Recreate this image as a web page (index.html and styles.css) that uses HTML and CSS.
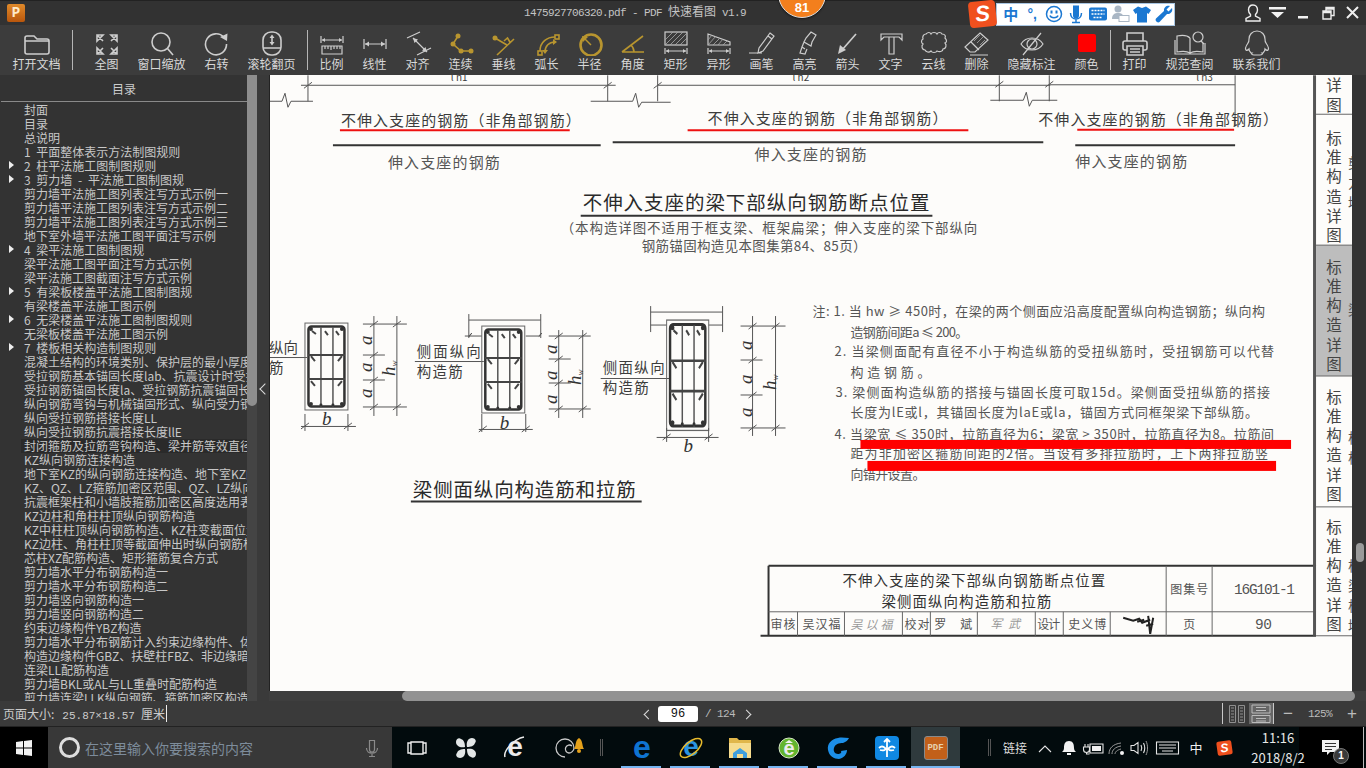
FILE: index.html
```html
<!DOCTYPE html>
<html lang="zh-CN">
<head>
    <meta charset="UTF-8">
    <title>1475927706320.pdf - PDF 快速看图 v1.9</title>
    <link rel="stylesheet" href="styles.css">
</head>
<body>
<div class="screen">

    <!-- barra de titulo -->
    <div class="titlebar">
        <div class="app-icon">P</div>
        <div class="doc-title">1475927706320.pdf - PDF <span class="cjk">快速看图</span> v1.9</div>
        <div class="win-controls">
            <svg class="win-user" width="20" height="20" viewBox="0 0 20 20"><path class="line-white" d="M10 2c3 0 4.500 2.200 4.500 5 0 2-1 3.500-2 4.500v1.500l4.500 2.500v2.500H3v-2.500L7.500 13v-1.500c-1-1-2-2.500-2-4.500 0-2.800 1.500-5 4.500-5z"/></svg>
            <svg width="20" height="20" viewBox="0 0 20 20"><path class="solid-white" d="M1 4h17v2.500H1zM3 9h13l-6.500 6z"/></svg>
            <svg width="20" height="20" viewBox="0 0 20 20"><path class="solid-white" d="M5 13h10v2.500H5z"/></svg>
            <svg width="20" height="20" viewBox="0 0 20 20"><path class="line-white" d="M5 8h8v8H5zM8 8V4.500h8v8h-3M5 9.500h8M8 6h8"/></svg>
            <svg width="20" height="20" viewBox="0 0 20 20"><path class="line-white thick" d="M4 4l11 11M15 4L4 15"/></svg>
        </div>
    </div>
    <div class="badge"><span>81</span></div>

    <!-- barra flutuante do IME -->
    <div class="ime">
        <div class="ime-logo">S</div>
        <div class="ime-bar">
            <span class="ime-zh">中</span>
            <span class="ime-punct">°,</span>
            <svg width="20" height="20" viewBox="0 0 20 20"><circle class="ime-line" cx="10" cy="10" r="7.500"/><path class="ime-line" d="M6 11.500c1 3 7 3 8 0"/><path class="ime-fill" d="M6.500 6.500h2v3h-2zM11.500 6.500h2v3h-2z"/></svg>
            <svg width="20" height="20" viewBox="0 0 20 20"><path class="ime-fill" d="M7 1.500h6v10a3 3 0 0 1-6 0z"/><path class="ime-line" d="M4.500 9c0 8 11 8 11 0M10 15v3M6 18.500h8"/></svg>
            <svg width="20" height="20" viewBox="0 0 20 20"><rect class="ime-fill" x="1" y="3.500" width="18" height="13" rx="2"/><path class="ime-keys" d="M3.500 6.500h13M3.500 10h13M5.500 13.500h9"/></svg>
            <svg width="20" height="20" viewBox="0 0 20 20"><circle class="ime-faded" cx="8" cy="5" r="3.500"/><path class="ime-faded" d="M2 15c0-5 3-6 6-6s6 1 6 6z"/><rect class="ime-pale" x="9" y="11.500" width="10" height="6"/></svg>
            <svg width="20" height="20" viewBox="0 0 20 20"><path class="ime-fill" d="M6 2.500l4 1.500 4-1.500 5 3.500-2.500 4-1.500-1v9.500h-10V9l-1.500 1-2.500-4z"/></svg>
            <svg width="20" height="20" viewBox="0 0 20 20"><path class="ime-fill" d="M18 4l-3.500 3.500-2-2L16 2c-3-1-6.500 1-6 5L2 14.500c-1.500 2 1.500 5 3.500 3.500L13 10c4 .5 6-3 5-6z"/></svg>
        </div>
    </div>

    <!-- barra de ferramentas -->
    <div class="toolbar">
        <div class="tool wide">
            <svg class="ic" viewBox="0 0 36 26"><path d="M6 8a2 2 0 0 1 2-2h7l3 3h10a2 2 0 0 1 2 2v11a2 2 0 0 1-2 2H8a2 2 0 0 1-2-2zM6 11h24"/></svg>
            <span>打开文档</span>
        </div>
        <div class="sep sep-first"></div>
        <div class="tool">
            <svg class="ic" viewBox="0 0 36 26"><path d="M8 5l6 6M8 5h6l-6 6zM28 5l-6 6M28 5h-6l6 6zM8 24l6-6M8 24h6l-6-6zM28 24l-6-6M28 24h-6l6-6z"/></svg>
            <span>全图</span>
        </div>
        <div class="tool wide">
            <svg class="ic" viewBox="0 0 36 26"><circle cx="17" cy="12" r="9"/><path d="M23.500 18.500L29 25"/></svg>
            <span>窗口缩放</span>
        </div>
        <div class="tool">
            <svg class="ic" viewBox="0 0 36 26"><path d="M25 7.500A10.500 10.500 0 1 0 27.500 14"/><path class="ic-solid" d="M21 7l7.500-3.500L28 11z"/></svg>
            <span>右转</span>
        </div>
        <div class="tool wide">
            <svg class="ic" viewBox="0 0 36 26"><rect x="9" y="2" width="18" height="23" rx="8"/><path d="M9 18h18M18 6v8"/><path class="ic-solid" d="M15.500 8L18 4.500 20.500 8zM15.500 12l2.500 3.500 2.500-3.500z"/></svg>
            <span>滚轮翻页</span>
        </div>
        <div class="sep"></div>
        <div class="tool">
            <svg class="ic thin" viewBox="0 0 36 26"><path d="M7 6v7M29 6v7M8 10h20M8 16h20v8H8zM11 16v3M14 16v3M17 16v4M20 16v3M23 16v3M26 16v3"/><path class="ic-solid" d="M8 10l3-2v4zM28 10l-3-2v4z"/></svg>
            <span>比例</span>
        </div>
        <div class="tool">
            <svg class="ic thin" viewBox="0 0 36 26"><path d="M7 9v10M29 9v10M8 14h20"/><path class="ic-solid" d="M8 14l4-2.500v5zM28 14l-4-2.500v5z"/></svg>
            <span>线性</span>
        </div>
        <div class="tool">
            <svg class="ic thin" viewBox="0 0 36 26"><path d="M7 8l13-6M17 25l14-7M13 8l14 14"/><path class="ic-solid" d="M13 8l5 1.500-3.500 3.500zM27 22l-5-1.500 3.500-3.500z"/></svg>
            <span>对齐</span>
        </div>
        <div class="tool gold">
            <svg class="ic" viewBox="0 0 36 26"><path d="M15 6l-5 8 8 7h10"/><circle class="ic-solid" cx="15" cy="6" r="2.500"/><circle class="ic-solid" cx="10" cy="14" r="2.500"/><circle class="ic-solid" cx="18" cy="21" r="2.500"/><circle class="ic-solid" cx="28" cy="21" r="2.500"/></svg>
            <span>连续</span>
        </div>
        <div class="tool gold">
            <svg class="ic" viewBox="0 0 36 26"><path d="M11 25L28 9M9 8l12 7M18 11l3.500-3 3 5"/><circle class="ic-solid" cx="9" cy="8" r="2.500"/></svg>
            <span>垂线</span>
        </div>
        <div class="tool gold">
            <svg class="ic" viewBox="0 0 36 26"><path d="M11 21C11 12 18 7 26 7M16 22c0-6 4-10 10-10"/><rect x="9" y="21" width="4" height="4"/><rect x="26" y="5" width="4" height="4"/><path class="ic-solid" d="M24 9l4 3-4 3zM13 20h6l-3 4z"/></svg>
            <span>弧长</span>
        </div>
        <div class="tool gold">
            <svg class="ic heavy" viewBox="0 0 36 26"><circle cx="19" cy="15" r="10.500"/><path class="ic-hair" d="M19 15L12 8"/><path class="ic-solid" d="M10 6l6 1-5 5z"/></svg>
            <span>半径</span>
        </div>
        <div class="tool gold">
            <svg class="ic" viewBox="0 0 36 26"><path d="M7 22L28 6M7 22h22M16 15c2 2 3 4 3 7"/></svg>
            <span>角度</span>
        </div>
        <div class="tool">
            <svg class="ic thin" viewBox="0 0 36 26"><rect x="7" y="2" width="22" height="13"/><path class="ic-hatch" d="M7 10l8-8M7 15L20 2M12 15L25 2M17 15L29 3M22 15l7-7"/><path d="M7 18v6M29 18v6M8 21h20"/><path class="ic-solid" d="M8 21l3-2v4zM28 21l-3-2v4z"/></svg>
            <span>矩形</span>
        </div>
        <div class="tool">
            <svg class="ic thin" viewBox="0 0 36 26"><path d="M7 4l22 8v3H7z"/><path class="ic-hatch" d="M7 10l4-5M7 15l8-9M12 15l7-7M17 15l5-6M22 15l4-4"/><path d="M7 18v6M29 18v6M8 21h20"/><path class="ic-solid" d="M8 21l3-2v4zM28 21l-3-2v4z"/></svg>
            <span>异形</span>
        </div>
        <div class="tool">
            <svg class="ic thin" viewBox="0 0 36 26"><path d="M26 3l4 3-11 15-5 2 1-5zM24 6l4 3M5 23h13"/></svg>
            <span>画笔</span>
        </div>
        <div class="tool">
            <svg class="ic thin" viewBox="0 0 36 26"><path d="M24 2l5 3-4 7-1 4-7-4 2-4zM17 12l-2 5 3 2M15 17l-2 6 5 1 2-5"/></svg>
            <span>高亮</span>
        </div>
        <div class="tool">
            <svg class="ic" viewBox="0 0 36 26"><path d="M26 4L12 20"/><path class="ic-solid" d="M8 24l2-9 6 5z"/></svg>
            <span>箭头</span>
        </div>
        <div class="tool">
            <svg class="ic thin" viewBox="0 0 36 26"><path d="M8 4h21v6l-3-3h-5v17h-5V7h-5l-3 3zM15 7h6"/></svg>
            <span>文字</span>
        </div>
        <div class="tool">
            <svg class="ic thin" viewBox="0 0 36 26"><path d="M10 4c2-2 4-2 5 0 1-2 5-2 6 0 1-2 4-2 5 0 3 0 4 2 3 4 2 2 2 4 0 5 2 2 1 6-2 6 0 3-4 3-6 2-1 2-5 2-6 0-2 2-5 1-6-1-3 0-4-4-2-6-2-1-2-4 0-5-1-3 1-5 3-5z"/></svg>
            <span>云线</span>
        </div>
        <div class="tool">
            <svg class="ic thin" viewBox="0 0 36 26"><path d="M21 3l8 7-13 12h-5l-5-5zM12 12l8 8M11 25h18"/><path class="ic-hatch" d="M21 5l-6 6M24 7l-6 6M26 10l-5 5"/></svg>
            <span>删除</span>
        </div>
        <div class="tool wide">
            <svg class="ic thin" viewBox="0 0 36 26"><path d="M7 14c5-8 17-8 22 0-5 8-17 8-22 0zM27 3L9 25"/><circle cx="18" cy="14" r="5"/></svg>
            <span>隐藏标注</span>
        </div>
        <div class="tool">
            <div class="color-chip"></div>
            <span>颜色</span>
        </div>
        <div class="sep"></div>
        <div class="tool">
            <svg class="ic" viewBox="0 0 36 26"><path d="M10 11V3h16v8M10 20H8a2 2 0 0 1-2-2v-5a2 2 0 0 1 2-2h20a2 2 0 0 1 2 2v5a2 2 0 0 1-2 2h-2M10 16h16v9H10zM13 19h10M13 22h10"/></svg>
            <span>打印</span>
        </div>
        <div class="tool wide">
            <svg class="ic thin" viewBox="0 0 36 26"><path d="M18 8C15 5 10 5 5 6v16c5-1 10-1 13 1 3-2 8-2 13-1V13M18 8v15M3 10v14h30V13"/><circle cx="26" cy="7" r="5"/><path d="M29 11l3 3"/></svg>
            <span>规范查阅</span>
        </div>
        <div class="tool wide">
            <svg class="ic thin" viewBox="0 0 36 26"><path d="M18 1c5 0 8 4 8 8 0 2 0 3 1 4 2 3 3 6 2 7-1 1-2 0-3-1 0 2-1 3-2 4h-1c1 1 0 2-2 2h-6c-2 0-3-1-2-2h-1c-1-1-2-2-2-4-1 1-2 2-3 1-1-1 0-4 2-7 1-1 1-2 1-4 0-4 3-8 8-8z"/></svg>
            <span>联系我们</span>
        </div>
    </div>

    <div class="main">
        <!-- painel do indice -->
        <div class="sidebar">
            <div class="toc">
                <div class="toc-head">目录</div>
                <div class="toc-list">
                    <div class="toc-row">封面</div>
                    <div class="toc-row">目录</div>
                    <div class="toc-row">总说明</div>
                    <div class="toc-row">1 平面整体表示方法制图规则</div>
                    <div class="toc-row folder">2 柱平法施工图制图规则</div>
                    <div class="toc-row folder">3 剪力墙 - 平法施工图制图规</div>
                    <div class="toc-row">剪力墙平法施工图列表注写方式示例一</div>
                    <div class="toc-row">剪力墙平法施工图列表注写方式示例二</div>
                    <div class="toc-row">剪力墙平法施工图列表注写方式示例三</div>
                    <div class="toc-row">地下室外墙平法施工图平面注写示例</div>
                    <div class="toc-row folder">4 梁平法施工图制图规</div>
                    <div class="toc-row">梁平法施工图平面注写方式示例</div>
                    <div class="toc-row">梁平法施工图截面注写方式示例</div>
                    <div class="toc-row folder">5 有梁板楼盖平法施工图制图规</div>
                    <div class="toc-row">有梁楼盖平法施工图示例</div>
                    <div class="toc-row folder">6 无梁楼盖平法施工图制图规则</div>
                    <div class="toc-row">无梁板楼盖平法施工图示例</div>
                    <div class="toc-row folder">7 楼板相关构造制图规则</div>
                    <div class="toc-row">混凝土结构的环境类别、保护层的最小厚度</div>
                    <div class="toc-row">受拉钢筋基本锚固长度lab、抗震设计时受拉钢筋</div>
                    <div class="toc-row">受拉钢筋锚固长度la、受拉钢筋抗震锚固长度</div>
                    <div class="toc-row">纵向钢筋弯钩与机械锚固形式、纵向受力钢筋</div>
                    <div class="toc-row">纵向受拉钢筋搭接长度LL</div>
                    <div class="toc-row">纵向受拉钢筋抗震搭接长度llE</div>
                    <div class="toc-row selected">封闭箍筋及拉筋弯钩构造、梁并筋等效直径</div>
                    <div class="toc-row">KZ纵向钢筋连接构造</div>
                    <div class="toc-row">地下室KZ的纵向钢筋连接构造、地下室KZ的</div>
                    <div class="toc-row">KZ、QZ、LZ箍筋加密区范围、QZ、LZ纵向钢筋</div>
                    <div class="toc-row">抗震框架柱和小墙肢箍筋加密区高度选用表</div>
                    <div class="toc-row">KZ边柱和角柱柱顶纵向钢筋构造</div>
                    <div class="toc-row">KZ中柱柱顶纵向钢筋构造、KZ柱变截面位置</div>
                    <div class="toc-row">KZ边柱、角柱柱顶等截面伸出时纵向钢筋构造</div>
                    <div class="toc-row">芯柱XZ配筋构造、矩形箍筋复合方式</div>
                    <div class="toc-row">剪力墙水平分布钢筋构造一</div>
                    <div class="toc-row">剪力墙水平分布钢筋构造二</div>
                    <div class="toc-row">剪力墙竖向钢筋构造一</div>
                    <div class="toc-row">剪力墙竖向钢筋构造二</div>
                    <div class="toc-row">约束边缘构件YBZ构造</div>
                    <div class="toc-row">剪力墙水平分布钢筋计入约束边缘构件、体积</div>
                    <div class="toc-row">构造边缘构件GBZ、扶壁柱FBZ、非边缘暗柱</div>
                    <div class="toc-row">连梁LL配筋构造</div>
                    <div class="toc-row">剪力墙BKL或AL与LL重叠时配筋构造</div>
                    <div class="toc-row">剪力墙连梁LLK纵向钢筋、箍筋加密区构造</div>
                </div>
            </div>
            <div class="toc-scroll"><div class="toc-thumb"></div></div>
            <div class="collapse"><span class="chevron left"></span></div>
        </div>

        <!-- area do documento -->
        <div class="viewer">
            <div class="viewer-row">
                <svg class="page" viewBox="269 75 1083 616" width="1083" height="616">
                    <defs>
                        <g id="cage">
                            <rect class="d-thin" x="0" y="0" width="43" height="87"/>
                            <rect class="d-heavy" x="3.500" y="3.500" width="36" height="80" rx="3"/>
                            <path class="d-mid" d="M16 4v80M28 4v80"/>
                            <path class="d-bar" d="M3 32h37M3 56h37"/>
                            <path class="d-bar" d="M7 8l4 3M20 8l3 4M31 8l3 4M6 33l4 5M37 33l-4 5M6 58l4 5M37 58l-4 5"/>
                            <circle class="d-dot" cx="6" cy="6" r="2"/><circle class="d-dot" cx="37" cy="6" r="2"/>
                            <circle class="d-dot" cx="6" cy="81" r="2"/><circle class="d-dot" cx="37" cy="81" r="2"/>
                            <circle class="d-dot" cx="16" cy="82" r="1.500"/><circle class="d-dot" cx="28" cy="82" r="1.500"/>
                        </g>
                    </defs>

                    <!-- linhas do topo -->
                    <path class="d-line" d="M300 85H615M657 85H1050M1049 84.500H1235M307 75v26M607 75v26M657 75v26M999 75v26M1049 75v26M1235 75v50"/>
                    <path class="d-line" d="M269 101h8l4 0 3-8 3 14 3-6h22M590 101h42l3-8 3 14 3-5h29M990 100h33l3-8 3 14 3-6h25"/>
                    <path class="d-line" d="M303 88l8-6M603 88l8-6M653 88l8-6M995 87l8-6M1045 87l8-6"/>
                    <text class="t-small" x="450" y="81">l n1</text>
                    <text class="t-small" x="792" y="81">l n2</text>
                    <text class="t-small" x="1196" y="81">l n3</text>

                    <text class="t-16" x="340" y="126" textLength="240">不伸入支座的钢筋（非角部钢筋）</text>
                    <text class="t-16" x="707" y="124" textLength="240">不伸入支座的钢筋（非角部钢筋）</text>
                    <text class="t-16" x="1038" y="125" textLength="240">不伸入支座的钢筋（非角部钢筋）</text>
                    <path class="d-red-thin" d="M339 130H569M687 130H968M1077 129.500H1234"/>
                    <path class="d-rule" d="M332 145H600M612 142H1043M1075 145H1235"/>
                    <text class="t-16 soft" x="387" y="168" textLength="112">伸入支座的钢筋</text>
                    <text class="t-16 soft" x="754" y="160" textLength="112">伸入支座的钢筋</text>
                    <text class="t-16 soft" x="1075" y="167" textLength="112">伸入支座的钢筋</text>

                    <text class="t-title" x="582" y="210" textLength="347">不伸入支座的梁下部纵向钢筋断点位置</text>
                    <path class="d-rule" d="M580 215.500H932"/>
                    <text class="t-14 soft" x="560" y="233" textLength="417">（本构造详图不适用于框支梁、框架扁梁；伸入支座的梁下部纵向</text>
                    <text class="t-14 soft" x="641" y="251" textLength="225">钢筋锚固构造见本图集第84、85页）</text>

                    <!-- corte 1 -->
                    <text class="t-15" x="268" y="353">纵向</text>
                    <text class="t-15" x="268" y="373">筋</text>
                    <path class="d-line" d="M269 357.500H306"/>
                    <use href="#cage" x="304" y="323"/>
                    <path class="d-line" d="M373 316V416M396 316V416M362 324H406M362 355H384M362 380H384M362 407H406M304 414V431M347 414V431M300 426.500H355"/>
                    <path class="d-line" d="M369 327l8-6M369 358l8-6M369 383l8-6M369 410l8-6M392 327l8-6M392 410l8-6M300 429l8-6M343 429l8-6"/>
                    <text class="t-it" transform="translate(371 345) rotate(-90)">a</text>
                    <text class="t-it" transform="translate(371 372) rotate(-90)">a</text>
                    <text class="t-it" transform="translate(371 398) rotate(-90)">a</text>
                    <text class="t-it" transform="translate(394 376) rotate(-90)">h<tspan class="t-sub" dy="2">w</tspan></text>
                    <text class="t-it" x="321" y="425">b</text>

                    <!-- corte 2 -->
                    <text class="t-15" x="416" y="357" textLength="64">侧面纵向</text>
                    <text class="t-15" x="416" y="377" textLength="46">构造筋</text>
                    <path class="d-line" d="M414 361.500H483"/>
                    <path class="d-line" d="M468 320H540M468 314v24M540 314v24M464 336h4l3-3-3 4M468 336H481M525 336H538l3-3-3 4"/>
                    <use href="#cage" x="481" y="326"/>
                    <path class="d-line" d="M558 330V418M582 330V418M548 336H590M548 359H570M548 383H570M548 409H590M481 414V432M525 414V432M478 429.500H532"/>
                    <path class="d-line" d="M554 339l8-6M554 362l8-6M554 386l8-6M554 412l8-6M578 339l8-6M578 412l8-6M478 432l8-6M521 432l8-6"/>
                    <text class="t-it" transform="translate(556 354) rotate(-90)">a</text>
                    <text class="t-it" transform="translate(556 380) rotate(-90)">a</text>
                    <text class="t-it" transform="translate(556 404) rotate(-90)">a</text>
                    <text class="t-it" transform="translate(580 385) rotate(-90)">h<tspan class="t-sub" dy="2">w</tspan></text>
                    <text class="t-it" x="499" y="429">b</text>

                    <!-- corte 3 -->
                    <text class="t-15" x="602" y="373" textLength="62">侧面纵向</text>
                    <text class="t-15" x="602" y="393" textLength="46">构造筋</text>
                    <path class="d-line" d="M600 378.500H670"/>
                    <path class="d-line" d="M650 312H722M650 306v26M722 306v26M650 325H666M708 325H722"/>
                    <use href="#cage" transform="translate(666 320) scale(.98 1.27)"/>
                    <path class="d-line" d="M752 316V436M775 316V436M740 326H785M740 360H762M740 395H762M740 428H785M666 428V442M708 428V442M656 437.500H718"/>
                    <path class="d-line" d="M748 329l8-6M748 363l8-6M748 398l8-6M748 431l8-6M771 329l8-6M771 431l8-6M662 440l8-6M704 440l8-6"/>
                    <text class="t-it" transform="translate(751 350) rotate(-90)">a</text>
                    <text class="t-it" transform="translate(751 384) rotate(-90)">a</text>
                    <text class="t-it" transform="translate(751 417) rotate(-90)">a</text>
                    <text class="t-it" transform="translate(775 390) rotate(-90)">h<tspan class="t-sub" dy="2">w</tspan></text>
                    <text class="t-it" x="683" y="452">b</text>

                    <text class="t-title" x="412" y="497" textLength="223">梁侧面纵向构造筋和拉筋</text>
                    <path class="d-rule" d="M410 501.500H641"/>

                    <!-- notas -->
                    <text class="t-note" x="812" y="316" textLength="453">注: 1. 当 hw ≥ 450时，在梁的两个侧面应沿高度配置纵向构造钢筋；纵向构</text>
                    <text class="t-note" x="850" y="337" textLength="118">造钢筋间距a ≤ 200。</text>
                    <text class="t-note" x="834" y="356" textLength="440">2. 当梁侧面配有直径不小于构造纵筋的受扭纵筋时，受扭钢筋可以代替</text>
                    <text class="t-note" x="850" y="377" textLength="80">构造钢筋。</text>
                    <text class="t-note" x="835" y="397" textLength="435">3. 梁侧面构造纵筋的搭接与锚固长度可取15d。梁侧面受扭纵筋的搭接</text>
                    <text class="t-note" x="850" y="417" textLength="408">长度为lE或l，其锚固长度为laE或la，锚固方式同框架梁下部纵筋。</text>
                    <text class="t-note" x="834" y="439" textLength="440">4. 当梁宽 ≤ 350时，拉筋直径为6；梁宽 &gt; 350时，拉筋直径为8。拉筋间</text>
                    <text class="t-note" x="850" y="458" textLength="418">距为非加密区箍筋间距的2倍。当设有多排拉筋时，上下两排拉筋竖</text>
                    <text class="t-note" x="850" y="479" textLength="75">向错开设置。</text>
                    <rect class="d-red" x="860" y="440" width="431" height="9"/>
                    <rect class="d-red" x="867" y="461" width="409" height="10"/>

                    <!-- carimbo -->
                    <path class="d-frame" d="M768 566H1316M768 566V636M760 636H1316"/>
                    <path class="d-thin-dark" d="M768 612H1316M1166 566V636M1212 566V636M797 612V636M844 612V636M902 612V636M930 612V636M977 612V636M1035 612V636M1063 612V636M1110 612V636"/>
                    <text class="t-15 dark" x="842" y="586" textLength="263">不伸入支座的梁下部纵向钢筋断点位置</text>
                    <text class="t-15 dark" x="881" y="607" textLength="170">梁侧面纵向构造筋和拉筋</text>
                    <text class="t-13" x="1170" y="594" textLength="38">图集号</text>
                    <text class="t-15 mono" x="1234" y="594" textLength="61">16G101-1</text>
                    <text class="t-13" x="770" y="629" textLength="25">审核</text>
                    <text class="t-13" x="802" y="629" textLength="38">吴汉福</text>
                    <text class="t-13 faint" x="850" y="629" textLength="42">吴以福</text>
                    <text class="t-13" x="904" y="629" textLength="25">校对</text>
                    <text class="t-13" x="934" y="629" textLength="38">罗  斌</text>
                    <text class="t-13 faint" x="990" y="628" textLength="30">军武</text>
                    <text class="t-13" x="1037" y="629" textLength="23">设计</text>
                    <text class="t-13" x="1068" y="629" textLength="38">史义博</text>
                    <path class="d-sign" d="M1123 618l10 3 6-2 3 4 8-3M1137 622l7-2M1148 616l2 18 3-16M1146 626l7-2"/>
                    <text class="t-13" x="1183" y="629">页</text>
                    <text class="t-15 mono" x="1255" y="629" textLength="17">90</text>

                    <!-- abas laterais -->
                    <path class="d-tabline" d="M1314.500 75V636"/>
                    <rect class="d-tab-active" x="1316" y="245" width="36" height="131"/>
                    <path class="d-thin-dark" d="M1316 114H1352M1316 245H1352M1316 376H1352M1316 507H1352M1316 636H1352"/>
                    <text class="t-tab" x="1334" y="91">详</text><text class="t-tab" x="1334" y="111">图</text>
                    <g class="tab-col">
                        <text class="t-tab" x="1334" y="144">标</text><text class="t-tab" x="1334" y="163">准</text><text class="t-tab" x="1334" y="182">构</text><text class="t-tab" x="1334" y="203">造</text><text class="t-tab" x="1334" y="222">详</text><text class="t-tab" x="1334" y="241">图</text>
                        <text class="t-tab" x="1334" y="273">标</text><text class="t-tab" x="1334" y="292">准</text><text class="t-tab" x="1334" y="311">构</text><text class="t-tab" x="1334" y="331">造</text><text class="t-tab" x="1334" y="351">详</text><text class="t-tab" x="1334" y="370">图</text>
                        <text class="t-tab" x="1334" y="403">标</text><text class="t-tab" x="1334" y="422">准</text><text class="t-tab" x="1334" y="441">构</text><text class="t-tab" x="1334" y="461">造</text><text class="t-tab" x="1334" y="481">详</text><text class="t-tab" x="1334" y="500">图</text>
                        <text class="t-tab" x="1334" y="533">标</text><text class="t-tab" x="1334" y="552">准</text><text class="t-tab" x="1334" y="571">构</text><text class="t-tab" x="1334" y="591">造</text><text class="t-tab" x="1334" y="611">详</text><text class="t-tab" x="1334" y="630">图</text>
                    </g>
                    <text class="t-14 soft" x="1348" y="168">剪</text><text class="t-14 soft" x="1348" y="188">力</text><text class="t-14 soft" x="1348" y="208">墙</text>
                    <text class="t-14 soft" x="1348" y="315">梁</text>
                    <text class="t-14 soft" x="1348" y="443">柱</text><text class="t-14 soft" x="1348" y="463">柱</text>
                    <text class="t-14 soft" x="1348" y="571">柱</text><text class="t-14 soft" x="1348" y="591">梁</text><text class="t-14 soft" x="1348" y="611">板</text><text class="t-14 soft" x="1348" y="631">墙</text>
                </svg>
                <div class="v-scroll"><div class="v-thumb"></div></div>
            </div>
            <div class="h-scroll"><div class="h-thumb"></div></div>
        </div>
    </div>

    <!-- barra de status -->
    <div class="statusbar">
        <div class="page-size">页面大小:<span class="ascii">25.87×18.57</span>厘米</div>
        <div class="caret"></div>
        <div class="pager">
            <span class="chevron left"></span>
            <div class="page-input">96</div>
            <span class="page-total">/ 124</span>
            <span class="chevron right"></span>
        </div>
        <div class="status-right">
            <div class="status-sep"></div>
            <svg class="view-btn" width="16" height="20" viewBox="0 0 16 20"><path class="view-line" d="M.5 1.500h6v17h-6zM9.500 1.500h6v17h-6zM2 4h3M2 7h3M2 10h3M2 13h3M2 16h3M11 4h3M11 7h3M11 10h3M11 13h3M11 16h3"/></svg>
            <svg class="view-btn active" width="24" height="20" viewBox="0 0 24 20"><path class="view-line" d="M3 1.500h18v8H3zM3 12h18v7H3zM7 4h10M7 7h10M7 15h10M7 17.500h10"/></svg>
            <div class="status-sep"></div>
            <span class="zoom-btn minus">−</span>
            <span class="zoom-val">125%</span>
            <span class="zoom-btn">+</span>
        </div>
    </div>

    <!-- barra do windows -->
    <div class="taskbar">
        <div class="start">
            <svg width="18" height="18" viewBox="0 0 18 18"><path class="solid-white" d="M1 3l7-1v6.500H1zM9 1.900L17 1v7.500H9zM1 9.500h7V16l-7-1zM9 9.500h8V17l-8-1.100z"/></svg>
        </div>
        <div class="search">
            <div class="cortana"></div>
            <span class="search-text">在这里输入你要搜索的内容</span>
            <svg class="search-mic" width="14" height="18" viewBox="0 0 14 18"><path class="mic-line" d="M4.500 1.500h5v9a2.500 2.500 0 0 1-5 0zM1.500 9c0 7 11 7 11 0M7 15v2M4 17.500h6"/></svg>
        </div>
        <div class="task-slot">
            <svg width="22" height="16" viewBox="0 0 22 16"><path class="line-white" d="M5 2h12v12H5zM5 3H2v10h3M17 3h3v10h-3"/></svg>
        </div>
        <div class="task-slot">
            <svg width="24" height="24" viewBox="0 0 24 24"><path class="solid-pale" d="M11 11C6 12 2 10 2 6c0-3 3-5 5-3 3 1 4 4 4 8zM13 11c-1-5 1-9 5-9 3 0 5 3 3 5-1 3-4 4-8 4zM13 13c5-1 9 1 9 5 0 3-3 5-5 3-3-1-4-4-4-8zM11 13c1 5-1 9-5 9-3 0-5-3-3-5 1-3 4-4 8-4z"/></svg>
        </div>
        <div class="task-slot">
            <svg width="26" height="26" viewBox="0 0 26 26"><text class="logo-e white" x="13" y="21">e</text><path class="ring-white" d="M3 22C1 16 12 4 22 2"/></svg>
        </div>
        <div class="task-slot spiral">
            <svg width="34" height="26" viewBox="0 0 34 26"><path class="spiral-line" d="M13 22a9 9 0 1 1 9-9c0 3-3 5-5 5a4 4 0 1 1 3-7"/><path class="bell-gold" d="M22 14c2-2 1-9 5-11 4 2 3 9 5 11z"/><circle class="bell-gold" cx="27" cy="16" r="2"/></svg>
        </div>
        <div class="task-grip"></div>
        <div class="task-slot running">
            <svg width="26" height="26" viewBox="0 0 26 26"><text class="logo-e edge" x="13" y="23">e</text></svg>
        </div>
        <div class="task-slot running">
            <svg width="26" height="26" viewBox="0 0 26 26"><text class="logo-e ie" x="13" y="21">e</text><ellipse class="ring-gold" cx="13" cy="13" rx="13" ry="6" transform="rotate(-40 13 13)"/></svg>
        </div>
        <div class="task-slot running">
            <svg width="24" height="22" viewBox="0 0 24 22"><path class="folder-back" d="M1 1h8l2 2h12v18H1z"/><path class="folder-front" d="M1 6h22v15H1z"/><path class="folder-blue" d="M5 21v-5l7-5 7 5v5h-4v-4H9v4z"/></svg>
        </div>
        <div class="task-slot running">
            <svg width="24" height="24" viewBox="0 0 24 24"><circle class="green-disc" cx="12" cy="12" r="10"/><text class="logo-e white small" x="12" y="19">e</text><path class="solid-white" d="M8 7l4-3 4 3z"/></svg>
        </div>
        <div class="task-slot running">
            <svg width="26" height="26" viewBox="0 0 26 26"><path class="g-blue" d="M24 3c-4 0-7-1-11 0C6 4 2 9 3 15c1 6 6 9 11 9 5-1 8-5 8-9l-6 1c1 2-1 3-3 3-3 0-5-3-4-6 1-4 5-5 9-5 3-1 5-3 6-5z"/></svg>
        </div>
        <div class="task-slot running">
            <svg width="24" height="24" viewBox="0 0 24 24"><rect class="app-blue" width="24" height="24" rx="4"/><path class="app-glyph" d="M12 3v18M9 6l3-3 3 3M4 12c2-2 4-2 6 0s-2 3-5 2M20 12c-2-2-4-2-6 0s2 3 5 2"/></svg>
        </div>
        <div class="task-slot running active">
            <div class="pdf-icon">PDF</div>
        </div>
        <div class="tray">
            <div class="task-grip tray-grip"></div>
            <span class="tray-item tray-links">链接</span>
            <svg class="tray-item tray-24" height="12" viewBox="0 0 24 12"><path class="tray-line" d="M6 10l6-6 6 6"/></svg>
            <svg class="tray-item tray-24" height="16" viewBox="0 0 24 16"><path class="solid-white" d="M12 1c4 0 5 3 5 7 0 2 1 3 2 4H5c1-1 2-2 2-4 0-4 1-7 5-7zM10 13h4v2h-4z"/></svg>
            <svg class="tray-item tray-24" height="14" viewBox="0 0 24 14"><path class="tray-line" d="M9 3h13v9H9zM4 3v3M7 3v3M2.500 6h6v2.500a3 3 0 0 1-6 0zM5.500 11v2h3"/><path class="solid-white" d="M11 5h9v5h-9z"/></svg>
            <svg class="tray-item tray-24" height="16" viewBox="0 0 24 16"><path class="tray-soft" d="M4 14c0-6 4-10 12-11M7 14c0-4 3-7 9-8M10 14c0-2 2-4 6-5"/><circle class="solid-white" cx="17" cy="13" r="2"/></svg>
            <svg class="tray-item tray-20" height="16" viewBox="0 0 20 16"><path class="tray-line" d="M2 5.500h3l4-3v11l-4-3H2zM12 5c1 2 1 4 0 6M14.500 3c1.500 3 1.500 7 0 10"/><path class="tray-soft" d="M17 1c2 4 2 10 0 14"/></svg>
            <svg class="tray-item tray-37" height="14" viewBox="0 0 37 14"><path class="tray-line" d="M7.500 1h22v12h-22zM10 4h17M10 7h17M13 10h11"/></svg>
            <span class="tray-item tray-zh">中</span>
            <div class="tray-item tray-36"><div class="sogou-mini">S</div></div>
            <div class="clock"><div>11:16</div><div>2018/8/2</div></div>
            <div class="action-center">
                <svg width="20" height="18" viewBox="0 0 20 18"><path class="solid-white" d="M1 1h17v12H9l-3 3v-3H1z"/><path class="notif-lines" d="M4 4.500h11M4 7.500h11M4 10.500h7"/></svg>
                <span class="notif-count">1</span>
            </div>
            <div class="desktop-peek"></div>
        </div>
    </div>
</div>
</body>
</html>
```

FILE: styles.css
```css
* {
    box-sizing: border-box;
}
body {
    margin: 0;
    background-color: #333;
    font-family: "Noto Sans CJK SC", "Noto Sans", sans-serif;
    color: #ccc;
    overflow: hidden;
}
.screen {
    position: relative;
    width: 1366px;
    height: 768px;
    overflow: hidden;
    display: flex;
    flex-direction: column;
}
svg {
    display: block;
    flex-shrink: 0;
}

/* titulo */
.titlebar {
    height: 25px;
    background-color: #323232;
    border-top: 1px solid #222;
    display: flex;
    align-items: center;
}
.app-icon {
    width: 18px;
    height: 18px;
    margin-left: 7px;
    border-radius: 2px;
    background: linear-gradient(#e08a2a, #b9560c);
    color: #ffe9c8;
    font: bold 14px/18px "Liberation Mono", monospace;
    text-align: center;
}
.doc-title {
    margin-left: 499px;
    font: 11px/24px "Liberation Mono", monospace;
    letter-spacing: -0.6px;
    color: #c4c4c4;
    white-space: pre;
}
.doc-title .cjk {
    font: 12px "Noto Sans CJK SC", sans-serif;
    letter-spacing: 0;
}
.win-controls {
    margin-left: auto;
    margin-right: 3px;
    display: flex;
    gap: 5px;
}
.line-white {
    fill: none;
    stroke: #eee;
    stroke-width: 1.4;
}
.line-white.thick {
    stroke-width: 2;
}
.solid-white {
    fill: #f2f2f2;
}
.solid-pale {
    fill: #e2e6e6;
}
.badge {
    position: absolute;
    left: 778px;
    top: -30px;
    width: 48px;
    height: 48px;
    border-radius: 50%;
    background-color: #f37f1d;
    border: 1px solid #ddd;
    box-shadow: 0 1px 2px rgba(0, 0, 0, 0.5);
    color: #fff;
    font: bold 13px/15px "Liberation Sans", sans-serif;
    text-align: center;
}
.badge span {
    display: block;
    margin-top: 29px;
}

/* barra do IME */
.ime {
    position: absolute;
    left: 969px;
    top: 1px;
    display: flex;
    align-items: center;
}
.ime-logo {
    width: 27px;
    height: 26px;
    background-color: #f0501e;
    border-radius: 4px;
    color: #fff;
    font: italic bold 22px/26px "Liberation Sans", sans-serif;
    text-align: center;
    transform: rotate(-6deg);
    z-index: 1;
}
.ime-bar {
    width: 179px;
    height: 23px;
    background-color: #fff;
    border: 1px solid #a9c6e2;
    display: flex;
    align-items: center;
    gap: 2px;
    padding-left: 4px;
    color: #1b78d2;
}
.ime-zh {
    width: 20px;
    font-size: 15px;
    line-height: 20px;
    font-weight: bold;
    text-align: center;
}
.ime-punct {
    width: 20px;
    font: bold 14px/14px "Liberation Sans", sans-serif;
    text-align: center;
}
.ime-line {
    fill: none;
    stroke: #1b78d2;
    stroke-width: 1.5;
}
.ime-fill {
    fill: #1b78d2;
}
.ime-keys {
    stroke: #fff;
    stroke-width: 1.5;
    stroke-dasharray: 2 1;
}
.ime-faded {
    fill: #a9b6c4;
}
.ime-pale {
    fill: #fff;
    stroke: #a9b6c4;
}

/* ferramentas */
.toolbar {
    height: 50px;
    background-color: #3c3c3c;
    display: flex;
    align-items: stretch;
    padding-left: 3px;
}
.tool {
    width: 43px;
    display: flex;
    flex-direction: column;
    align-items: center;
    padding-top: 5px;
    color: #d8d8d8;
    font-size: 12px;
    line-height: 16px;
    white-space: nowrap;
}
.tool.wide {
    width: 67px;
}
.ic {
    width: 36px;
    height: 26px;
    fill: none;
    stroke: #cdcdcd;
    stroke-width: 1.6;
}
.ic.thin {
    stroke-width: 1.2;
}
.ic.heavy {
    stroke-width: 2.6;
}
.ic-solid {
    fill: #cdcdcd;
    stroke: none;
}
.ic-hatch {
    stroke-width: 0.8;
    stroke: #aaa;
}
.ic-hair {
    stroke-width: 1.4;
}
.tool.gold .ic {
    stroke: #b8952f;
}
.tool.gold .ic-solid {
    fill: #b8952f;
    stroke: none;
}
.color-chip {
    width: 18px;
    height: 18px;
    margin: 4px 0 4px;
    background-color: #f00;
    border-radius: 2px;
}
.sep {
    width: 1px;
    height: 40px;
    margin: 5px 2px 0;
    background-color: #b5b5b5;
}
.sep-first {
    margin-right: 12px;
}

/* indice */
.main {
    height: 626px;
    display: flex;
}
.sidebar {
    width: 269px;
    display: flex;
    background-color: #333;
}
.toc {
    width: 247px;
    display: flex;
    flex-direction: column;
    overflow: hidden;
}
.toc-head {
    height: 27px;
    margin-left: 1px;
    border-bottom: 1px solid #8a8a8a;
    text-align: center;
    font-size: 12px;
    line-height: 24px;
    padding-top: 2px;
    color: #ccc;
}
.toc-list {
    padding-top: 1px;
}
.toc-row {
    height: 14px;
    padding-left: 24px;
    font-size: 12px;
    line-height: 14px;
    word-spacing: 3px;
    white-space: nowrap;
    position: relative;
    color: #c8c8c8;
}
.toc-row.selected {
    margin-left: 21px;
    padding-left: 3px;
    background-color: #2a2a2a;
}
.toc-row.folder::before {
    content: "";
    position: absolute;
    left: 9px;
    top: 2px;
    border-left: 5px solid #eee;
    border-top: 4.500px solid transparent;
    border-bottom: 4.500px solid transparent;
}
.toc-scroll {
    width: 10px;
    background-color: #444;
}
.toc-thumb {
    height: 331px;
    background-color: #8e8e8e;
    border-radius: 0 0 5px 5px;
}
.collapse {
    width: 12px;
    background-color: #3a3a3a;
    display: flex;
    align-items: center;
    justify-content: center;
}
.chevron {
    display: inline-block;
    width: 7px;
    height: 7px;
    border-left: 1.500px solid #ddd;
    border-bottom: 1.500px solid #ddd;
}
.chevron.left {
    transform: rotate(45deg);
}
.chevron.right {
    transform: rotate(-135deg);
}
.collapse .chevron {
    width: 8px;
    height: 8px;
    margin-left: 4px;
    margin-top: 1px;
}

/* documento */
.viewer {
    flex: 1;
    display: flex;
    flex-direction: column;
    background-color: #333;
}
.viewer-row {
    display: flex;
    height: 616px;
}
.page {
    background-color: #fdfcfa;
    border-left: 1px solid #222;
}
.v-scroll {
    width: 14px;
    background-color: #333;
    padding: 468px 2px 0 4px;
}
.v-thumb {
    height: 19px;
    background-color: #9a9a9a;
    border-radius: 4px;
}
.h-scroll {
    height: 10px;
    background-color: #3e3e3e;
    padding-left: 133px;
    padding-right: 11px;
}
.h-thumb {
    height: 10px;
    background-color: #929292;
    border-radius: 5px;
}

/* desenho escaneado */
.page text {
    font-family: "Noto Sans CJK SC", sans-serif;
    fill: #3c3c3c;
}
.t-small {
    font-size: 10px;
}
.page .t-16 {
    font-size: 15px;
}
.page .t-15 {
    font-size: 14.500px;
}
.page .t-14 {
    font-size: 13.500px;
}
.page .t-13 {
    font-size: 12px;
    fill: #555;
}
.page .t-title {
    font-size: 19.500px;
    fill: #2a2a2a;
}
.page .t-note {
    font-size: 13px;
    fill: #555;
}
.page .t-tab {
    font-size: 15.500px;
    text-anchor: middle;
    fill: #444;
}
.page .t-it {
    font: italic 19px "Liberation Serif", serif;
    fill: #333;
}
.page .t-sub {
    font-size: 9px;
}
.page .soft {
    fill: #555;
}
.page .faint {
    fill: #999;
    font-style: italic;
}
.page .dark {
    fill: #333;
}
.page .mono {
    font-family: "Liberation Mono", monospace;
    fill: #555;
}
.d-line {
    fill: none;
    stroke: #555;
    stroke-width: 1;
}
.d-thin {
    fill: none;
    stroke: #666;
    stroke-width: 1;
}
.d-heavy {
    fill: none;
    stroke: #333;
    stroke-width: 2.500;
}
.d-mid {
    stroke: #555;
    stroke-width: 1.500;
}
.d-bar {
    stroke: #444;
    stroke-width: 2;
}
.d-dot {
    fill: #333;
}
.d-rule {
    fill: none;
    stroke: #333;
    stroke-width: 2;
}
.d-red {
    fill: #f00;
}
.d-red-thin {
    fill: none;
    stroke: #e11;
    stroke-width: 2;
}
.d-frame {
    fill: none;
    stroke: #333;
    stroke-width: 2;
}
.d-thin-dark {
    fill: none;
    stroke: #666;
    stroke-width: 1;
}
.d-sign {
    fill: none;
    stroke: #222;
    stroke-width: 2;
}
.d-tabline {
    stroke: #555;
    stroke-width: 3;
}
.d-tab-active {
    fill: #bdbdbd;
}

/* status */
.statusbar {
    height: 26px;
    background-color: #3a3a3a;
    border-bottom: 1px solid #222;
    display: flex;
    align-items: center;
    font-size: 12px;
    color: #ccc;
    position: relative;
}
.page-size {
    margin-left: 3px;
    white-space: pre;
}
.ascii {
    margin: 0 6px 0 8px;
    font: 11px "Liberation Mono", monospace;
}
.caret {
    width: 1px;
    height: 17px;
    margin-left: 1px;
    background-color: #eee;
}
.pager {
    position: absolute;
    left: 642px;
    top: 5px;
    display: flex;
    align-items: center;
}
.pager .chevron.left {
    margin-left: 3px;
}
.page-input {
    width: 40px;
    height: 16px;
    margin-left: 6px;
    background-color: #fff;
    border-radius: 3px;
    color: #111;
    font: 12px/16px "Liberation Mono", monospace;
    text-align: center;
}
.page-total {
    margin-left: 7px;
    width: 38px;
    font: 11px "Liberation Mono", monospace;
    letter-spacing: -0.6px;
    color: #bbb;
    white-space: pre;
}
.status-right {
    margin-left: auto;
    display: flex;
    align-items: center;
    height: 23px;
    padding-right: 4px;
}
.status-sep {
    width: 1px;
    height: 21px;
    background-color: #c8c8c8;
}
.view-btn {
    margin-left: 6px;
}
.view-btn.active {
    margin-left: 4px;
    background-color: #666;
    height: 21px;
}
.view-line {
    fill: none;
    stroke: #8f8f8f;
    stroke-width: 1;
}
.view-btn.active .view-line {
    stroke: #bbb;
}
.zoom-btn {
    width: 20px;
    text-align: center;
    font: 17px/20px "Liberation Sans", sans-serif;
    color: #bbb;
}
.zoom-btn.minus {
    margin-left: 4px;
}
.zoom-val {
    width: 44px;
    text-align: center;
    font: 11px "Liberation Mono", monospace;
    letter-spacing: -0.6px;
    color: #bbb;
}

/* barra do windows */
.taskbar {
    height: 41px;
    background-color: #020b0d;
    display: flex;
    align-items: stretch;
    position: relative;
}
.start {
    width: 48px;
    background-color: #000;
    display: flex;
    align-items: center;
    justify-content: center;
}
.search {
    width: 344px;
    background-color: #383838;
    display: flex;
    align-items: center;
    padding-left: 11px;
}
.cortana {
    width: 21px;
    height: 21px;
    border: 3px solid #ddd;
    border-radius: 50%;
    flex-shrink: 0;
}
.search-text {
    margin-left: 5px;
    font-size: 14px;
    color: #7d8c9b;
    white-space: nowrap;
}
.search-mic {
    margin-left: 112px;
}
.mic-line {
    fill: none;
    stroke: #8a8a8a;
    stroke-width: 1.2;
}
.task-slot {
    width: 49px;
    display: flex;
    align-items: center;
    justify-content: center;
    position: relative;
}
.task-slot.spiral {
    width: 60px;
}
.task-slot.running::after {
    content: "";
    position: absolute;
    left: 4px;
    right: 5px;
    bottom: 0;
    height: 2px;
    background-color: #76b4f0;
}
.task-slot.active {
    background-color: #2f3a3d;
}
.task-slot.active::after {
    left: 0;
    right: 0;
}
.task-grip {
    width: 3px;
    height: 17px;
    margin: 12px 14px 0 1px;
    border-left: 1px solid #555;
    border-right: 1px solid #555;
}
.logo-e {
    font: bold 28px "Liberation Sans", sans-serif;
    text-anchor: middle;
}
.logo-e.white {
    fill: #ececec;
}
.logo-e.small {
    font-size: 20px;
}
.logo-e.edge {
    font-size: 32px;
    fill: #0f74d1;
}
.logo-e.ie {
    fill: #2b93e0;
}
.ring-white {
    fill: none;
    stroke: #ececec;
    stroke-width: 1.500;
}
.ring-gold {
    fill: none;
    stroke: #e8bb2c;
    stroke-width: 1.500;
}
.spiral-line {
    fill: none;
    stroke: #c9c9c9;
    stroke-width: 1.300;
}
.bell-gold {
    fill: #e4a11b;
}
.folder-back {
    fill: #e0b64a;
}
.folder-front {
    fill: #f6dc8e;
}
.folder-blue {
    fill: #3f9fde;
}
.green-disc {
    fill: #63b52f;
    stroke: #d8e8c8;
    stroke-width: 1;
}
.g-blue {
    fill: #1c8fe8;
}
.app-blue {
    fill: #1088e2;
}
.app-glyph {
    fill: none;
    stroke: #fff;
    stroke-width: 1.800;
}
.pdf-icon {
    width: 24px;
    height: 24px;
    background-color: #c2601a;
    border: 1px solid #8a8a8a;
    border-radius: 3px;
    color: #e8d0b0;
    font: bold 9px/22px "Liberation Mono", monospace;
    text-align: center;
}
.tray {
    display: flex;
    align-items: center;
    margin-left: 28px;
    flex: 1;
}
.tray-grip {
    margin: 0 6px 0 0;
}
.tray-item {
    flex-shrink: 0;
    text-align: center;
    color: #ddd;
    font-size: 12px;
}
.tray-links {
    width: 36px;
}
.tray-24 {
    width: 24px;
}
.tray-20 {
    width: 20px;
}
.tray-37 {
    width: 37px;
}
.tray-36 {
    width: 36px;
    display: flex;
    justify-content: center;
}
.tray-zh {
    width: 20px;
    font-size: 13px;
    color: #eee;
}
.tray-line {
    fill: none;
    stroke: #e4e4e4;
    stroke-width: 1.100;
}
.tray-soft {
    fill: none;
    stroke: #999;
    stroke-width: 1;
}
.sogou-mini {
    width: 15px;
    height: 14px;
    background-color: #ef4f1d;
    border-radius: 2px;
    color: #fff;
    font: italic bold 12px/14px "Liberation Sans", sans-serif;
    text-align: center;
    transform: rotate(-8deg);
}
.clock {
    width: 72px;
    margin-right: -15px;
    text-align: center;
    font-size: 13px;
    line-height: 20px;
    color: #e8e8e8;
    white-space: nowrap;
    position: relative;
    z-index: 1;
}
.action-center {
    width: 64px;
    height: 100%;
    background-color: #000;
    display: flex;
    align-items: center;
    justify-content: center;
    position: relative;
}
.notif-lines {
    stroke: #333;
    stroke-width: 1;
}
.notif-count {
    position: absolute;
    left: 34px;
    top: 21px;
    width: 16px;
    height: 16px;
    border-radius: 50%;
    background-color: #3a3a3a;
    border: 1px solid #777;
    color: #fff;
    font: bold 10px/14px "Liberation Sans", sans-serif;
    text-align: center;
}
.desktop-peek {
    flex: 1;
    height: 100%;
    border-left: 1px solid #bbb;
}
```
